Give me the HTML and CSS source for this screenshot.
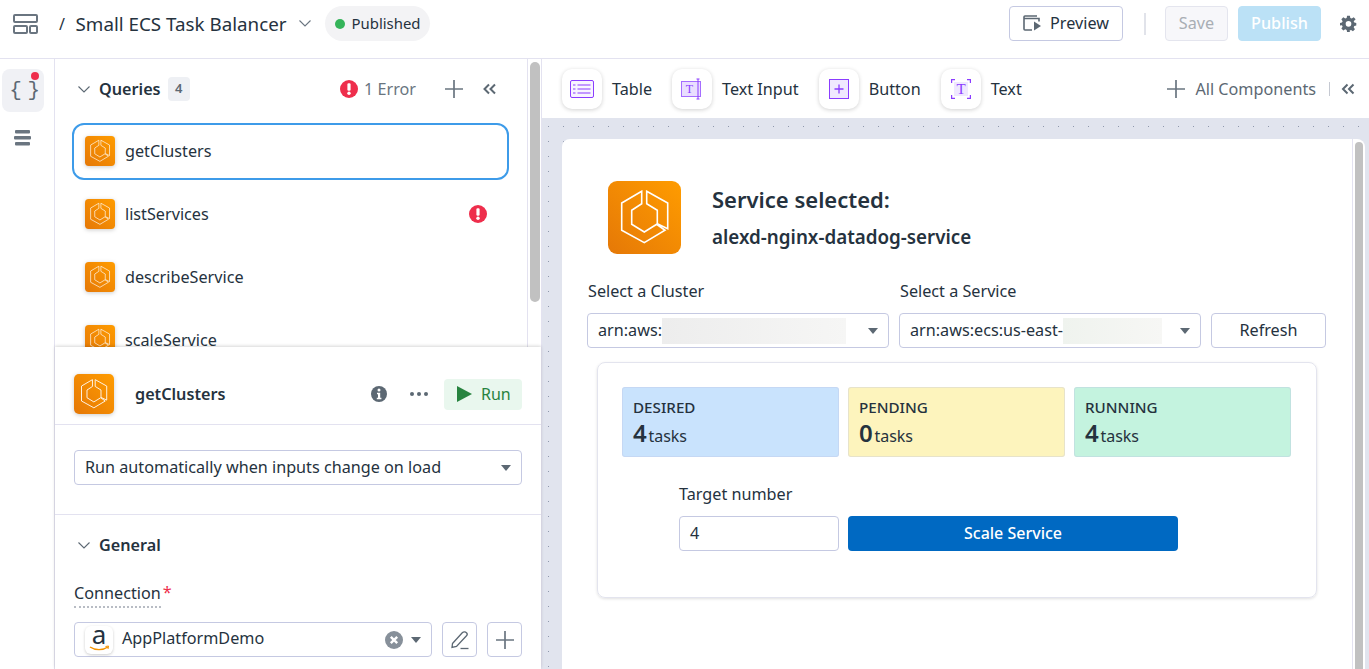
FILE: index.html
```html
<!DOCTYPE html>
<html lang="en">
<head>
<meta charset="utf-8">
<title>Small ECS Task Balancer</title>
<link rel="stylesheet" href="styles.css">
</head>
<body>
<svg class="defs" width="0" height="0" aria-hidden="true">
  <defs>
    <linearGradient id="aws" x1="0" y1="1" x2="1" y2="0">
      <stop offset="0" stop-color="#e57807"/>
      <stop offset="1" stop-color="#ff9c00"/>
    </linearGradient>
    <symbol id="ecs" viewBox="0 0 73 73">
      <rect width="73" height="73" rx="9" fill="url(#aws)"/>
      <path d="M33.7 10.3 13.7 22v27.3l22.6 12.4L57 49.3l-8.3-6-12.4 7.7-12.6-7.700V29.3l10-6.6zM38.700 10.300l21 11.700v25.700l-10.400-5V29.300l-10.600-6.600z" fill="none" stroke="#fff" stroke-width="1.6" stroke-linejoin="miter"/>
    </symbol>
    <symbol id="err" viewBox="0 0 18 18">
      <circle cx="9" cy="9" r="9" fill="#ee2e4c"/>
      <rect x="7.4" y="3.2" width="3.2" height="7.6" rx="1.2" fill="#fff"/>
      <circle cx="9" cy="13.2" r="1.7" fill="#fff"/>
    </symbol>
    <symbol id="plus" viewBox="0 0 18 18">
      <path d="M9 0v18M0 9h18" stroke="currentColor" stroke-width="1.7" fill="none"/>
    </symbol>
    <symbol id="dbl" viewBox="0 0 14 12">
      <path d="M6.5 1.5 2 6l4.5 4.5M12.5 1.5 8 6l4.5 4.5" stroke="currentColor" stroke-width="2" fill="none"/>
    </symbol>
    <symbol id="chev" viewBox="0 0 12 7">
      <path d="M.5.5 6 6 11.500 .5" stroke="currentColor" stroke-width="1.1" fill="none"/>
    </symbol>
  </defs>
</svg>

<header class="topbar">
  <svg class="apps-icon" width="25" height="20" viewBox="0 0 25 20" fill="none" stroke="#6a7580" stroke-width="2">
    <rect x="1" y="1" width="23" height="7" rx="1"/>
    <rect x="1" y="12" width="13" height="7" rx="1"/>
    <rect x="17" y="12" width="7" height="7" rx="1"/>
  </svg>
  <span class="slash">/</span>
  <span class="app-title">Small ECS Task Balancer</span>
  <svg class="title-chev" width="12" height="7"><use href="#chev"/></svg>
  <span class="pill"><i class="pill-dot"></i><span class="pill-text">Published</span></span>
  <span class="spacer"></span>
  <button class="btn btn-preview">
    <svg width="19" height="16" viewBox="0 0 19 16" fill="none">
      <path d="M14 1H2a1 1 0 0 0-1 1v12a1 1 0 0 0 1 1h7" stroke="#5c6873" stroke-width="1.6"/>
      <path d="M1 3.500h15v3" stroke="#5c6873" stroke-width="1.600"/>
      <path d="M11 6.500v9l7-4.500z" fill="#5c6873"/>
    </svg>
    Preview
  </button>
  <i class="top-sep"></i>
  <button class="btn btn-save">Save</button>
  <button class="btn btn-publish">Publish</button>
  <svg class="gear" width="17" height="17" viewBox="0 0 24 24">
    <path fill="#5c6873" fill-rule="evenodd" d="M10 1h4l.6 3.100 2 .9 2.700-1.800 2.800 2.800L19.300 8.700l.9 2L23 11.200v3.600l-2.800.6-.9 2 1.800 2.700-2.800 2.800-2.700-1.800-2 .9L14 24h-4l-.6-2.900-2-.9-2.700 1.800-2.800-2.800 1.800-2.700-.9-2L0 14.800v-3.600l2.800-.5.900-2L1.900 6l2.800-2.800L7.400 5l2-.9zM12 8.500a4 4 0 1 0 0 8 4 4 0 0 0 0-8z"/>
  </svg>
</header>

<div class="workspace">
  <nav class="rail">
    <div class="rail-tab"><span class="braces">{ }</span><i class="rail-dot"></i></div>
    <svg class="rail-stack" width="17" height="16" viewBox="0 0 17 16" fill="#6a7580">
      <rect x="1" y="0" width="15" height="3.600" rx="1"/>
      <rect x="0" y="6" width="17" height="3.600" rx="1"/>
      <rect x="1" y="12" width="15" height="3.600" rx="1"/>
    </svg>
  </nav>

  <aside class="side">
    <section class="queries">
      <div class="query-col">
        <div class="query-head">
          <svg class="head-chev" width="12" height="7"><use href="#chev"/></svg>
          <strong class="head-title">Queries</strong>
          <span class="count">4</span>
          <span class="spacer"></span>
          <svg width="18" height="18"><use href="#err"/></svg>
          <span class="err-text">1 Error</span>
          <svg class="head-plus" width="18" height="18"><use href="#plus"/></svg>
          <svg class="head-collapse" width="15" height="12"><use href="#dbl"/></svg>
        </div>
        <div class="query-row is-selected">
          <svg class="q-icon" width="30" height="30"><use href="#ecs"/></svg>
          <span class="q-name">getClusters</span>
        </div>
        <div class="query-row">
          <svg class="q-icon" width="30" height="30"><use href="#ecs"/></svg>
          <span class="q-name">listServices</span>
          <span class="spacer"></span>
          <svg class="q-err" width="18" height="18"><use href="#err"/></svg>
        </div>
        <div class="query-row">
          <svg class="q-icon" width="30" height="30"><use href="#ecs"/></svg>
          <span class="q-name">describeService</span>
        </div>
        <div class="query-row">
          <svg class="q-icon" width="30" height="30"><use href="#ecs"/></svg>
          <span class="q-name">scaleService</span>
        </div>
      </div>
      <div class="track"><i class="thumb"></i></div>
    </section>

    <section class="editor">
      <div class="editor-head">
        <svg class="editor-icon" width="40" height="40"><use href="#ecs"/></svg>
        <strong class="editor-name">getClusters</strong>
        <span class="spacer"></span>
        <svg class="info" width="16" height="16" viewBox="0 0 16 16">
          <circle cx="8" cy="8" r="8" fill="#5c6873"/>
          <circle cx="8" cy="4" r="1.500" fill="#fff"/>
          <path d="M6 6.800h3.200v5H10.400v1.400H5.800v-1.400h1.200V8.200H6z" fill="#fff"/>
        </svg>
        <svg class="dots" width="18" height="4" viewBox="0 0 18 4" fill="#5c6873">
          <circle cx="2" cy="2" r="2"/><circle cx="9" cy="2" r="2"/><circle cx="16" cy="2" r="2"/>
        </svg>
        <button class="run">
          <svg width="15" height="16" viewBox="0 0 15 16"><path d="M0 0l15 8-15 8z" fill="#27833f"/></svg>
          <span class="txt">Run</span>
        </button>
      </div>
      <div class="editor-trigger">
        <div class="select select-wide"><span class="txt">Run automatically when inputs change on load</span><i class="caret"></i></div>
      </div>
      <div class="editor-general">
        <div class="general-head">
          <svg class="head-chev" width="12" height="7"><use href="#chev"/></svg>
          <strong class="head-title">General</strong>
        </div>
        <div class="conn-label"><span class="dotted">Connection</span><span class="req">*</span></div>
        <div class="conn-row">
          <div class="select conn-select">
            <span class="amazon">
              <svg width="28" height="28" viewBox="0 0 28 28">
                <text x="14" y="18" text-anchor="middle" class="amazon-a">a</text>
                <path d="M5 21c5 3.500 13 3.500 18 0" stroke="#f59300" stroke-width="1.400" fill="none"/>
                <path d="M20.500 20.500l3-.5-.5 3" stroke="#f59300" stroke-width="1" fill="none"/>
              </svg>
            </span>
            <span class="conn-name">AppPlatformDemo</span>
            <span class="spacer"></span>
            <svg width="18" height="18" viewBox="0 0 18 18">
              <circle cx="9" cy="9" r="9" fill="#87909a"/>
              <path d="M5.800 5.800l6.400 6.400M12.200 5.800l-6.400 6.400" stroke="#fff" stroke-width="2.400"/>
            </svg>
            <i class="caret caret-conn"></i>
          </div>
          <button class="square">
            <svg width="20" height="20" viewBox="0 0 20 20" fill="none" stroke="#5c6873" stroke-width="1.300">
              <path d="M2.500 13.500 12.500 2.500c1-1 3-1 4 .3 1 1 .8 2.200 0 3L6.500 16.500l-4.500 1z"/>
              <path d="M10.500 18.500h8"/>
            </svg>
          </button>
          <button class="square">
            <svg width="18" height="18" class="square-plus"><use href="#plus"/></svg>
          </button>
        </div>
      </div>
    </section>
  </aside>

  <main class="stage">
    <div class="palette">
      <div class="tile">
        <svg width="24" height="18" viewBox="0 0 24 18" fill="none" stroke="#8b3dff">
          <rect x=".5" y=".5" width="23" height="17" rx="1.500" fill="#f8f5ff"/>
          <path d="M7.500 5h13M7.500 9h13M7.500 13h13" stroke-width="1.200"/>
          <path d="M3 5h2.500M3 9h2.500M3 13h2.500" stroke-width="1.200"/>
        </svg>
      </div>
      <span class="tile-label">Table</span>
      <div class="tile">
        <svg width="22" height="22" viewBox="0 0 22 22" fill="none" stroke="#8b3dff">
          <rect x=".5" y="3.500" width="19" height="15" fill="#e9deff" stroke="#a56dff"/>
          <path d="M17 1v20M15.500 1h3M15.500 21h3"/>
          <text x="8.500" y="15" text-anchor="middle" class="tile-t">T</text>
        </svg>
      </div>
      <span class="tile-label">Text Input</span>
      <div class="tile">
        <svg width="20" height="20" viewBox="0 0 20 20" fill="#f0e9ff" stroke="#8b3dff">
          <rect x=".5" y=".5" width="19" height="19"/>
          <path d="M10 5.500v9M5.500 10h9" stroke-width="1.300" fill="none"/>
        </svg>
      </div>
      <span class="tile-label">Button</span>
      <div class="tile">
        <svg width="20" height="20" viewBox="0 0 20 20" fill="none" stroke="#8b3dff" stroke-width="1.200">
          <rect x="3" y="3" width="14" height="14" fill="#efe8ff" stroke="none"/>
          <path d="M.6 4V.6H4M16 .6h3.400V4M.6 16v3.400H4M16 19.400h3.400V16"/>
          <text x="10" y="15" text-anchor="middle" class="tile-t tile-t-lg">T</text>
        </svg>
      </div>
      <span class="tile-label">Text</span>
      <span class="spacer"></span>
      <svg class="all-plus" width="18" height="18"><use href="#plus"/></svg>
      <span class="all-label">All Components</span>
      <i class="all-sep"></i>
      <svg class="all-collapse" width="14" height="12"><use href="#dbl"/></svg>
    </div>

    <div class="canvas">
      <div class="sheet">
        <div class="sheet-body">
          <div class="hero">
            <svg width="73" height="73"><use href="#ecs"/></svg>
            <div class="hero-text">
              <h1 class="hero-title">Service selected:</h1>
              <h2 class="hero-sub">alexd-nginx-datadog-service</h2>
            </div>
          </div>
          <div class="pickers">
            <label class="pick-label">Select a Cluster</label>
            <label class="pick-label">Select a Service</label>
            <span></span>
            <div class="select"><span class="txt">arn:aws:</span><i class="redact redact-a"></i><span class="spacer"></span><i class="caret"></i></div>
            <div class="select"><span class="txt">arn:aws:ecs:us-east-</span><i class="redact redact-b"></i><span class="spacer"></span><i class="caret"></i></div>
            <button class="btn btn-refresh">Refresh</button>
          </div>
          <div class="card">
            <div class="stats">
              <div class="stat stat-blue"><div class="stat-name">DESIRED</div><div class="stat-line"><b>4</b> tasks</div></div>
              <div class="stat stat-yellow"><div class="stat-name">PENDING</div><div class="stat-line"><b>0</b> tasks</div></div>
              <div class="stat stat-green"><div class="stat-name">RUNNING</div><div class="stat-line"><b>4</b> tasks</div></div>
            </div>
            <div class="scale">
              <div class="scale-label">Target number</div>
              <div class="scale-row">
                <div class="number">4</div>
                <button class="btn-scale">Scale Service</button>
              </div>
            </div>
          </div>
        </div>
        <div class="sheet-track"><i class="sheet-thumb"></i></div>
      </div>
    </div>
  </main>
</div>
</body>
</html>
```

FILE: styles.css
```css
* { box-sizing: border-box; }
html, body { margin: 0; height: 100%; }
body {
  width: 1369px;
  height: 669px;
  overflow: hidden;
  background: #fff;
  color: #25323e;
  font-family: "Noto Sans", "Liberation Sans", sans-serif;
  font-size: 16.2px;
}
.defs { position: absolute; }
.spacer { flex: 1 1 auto; }
.txt { padding-bottom: 1px; }
button { font: inherit; color: inherit; background: #fff; cursor: default; }
i { display: block; font-style: normal; }
svg { display: block; flex: none; }

/* top bar */
.topbar {
  display: flex;
  align-items: center;
  height: 59px;
  padding: 0 12px 11px 13px;
  border-bottom: 1px solid #e3e2f0;
}
.slash { margin-left: 21px; font-size: 16px; }
.app-title { margin-left: 10.6px; font-size: 18.8px; }
.title-chev { margin-left: 12px; color: #6a7580; }
.pill {
  display: flex;
  align-items: center;
  gap: 7px;
  height: 35px;
  margin-left: 14px;
  padding: 0 10px;
  border-radius: 18px;
  background: #f3f3f5;
  font-size: 14.9px;
}
.pill-dot { width: 10px; height: 10px; border-radius: 50%; background: #35b45a; }
.pill-text { padding-bottom: 1px; }
.btn {
  display: flex;
  align-items: center;
  justify-content: center;
  height: 35px;
  padding: 0 0 1px;
  border: 1px solid #c5c9e2;
  border-radius: 4px;
  font-size: 16.2px;
}
.btn-preview { gap: 8px; width: 114px; }
.top-sep { width: 2px; height: 22px; margin: 0 19px 0 21px; background: #e1e3ea; }
.btn-save { width: 63px; color: #a9aeb4; background: #f7f7fa; border-color: #e4e5ee; }
.btn-publish { width: 83px; margin-left: 10px; color: #fff; background: #bbe1f6; border-color: #bbe1f6; font-weight: 500; }
.gear { margin-left: 19px; }

/* workspace */
.workspace { display: flex; height: 610px; }
.rail { flex: none; width: 55px; padding: 10px 0 0 2px; border-right: 1px solid #e3e2f0; }
.rail-tab {
  position: relative;
  display: flex;
  align-items: center;
  justify-content: center;
  width: 42px;
  height: 43px;
  border-radius: 8px;
  background: #f0f1f5;
}
.braces { font-family: "Liberation Mono", monospace; font-size: 21px; color: #5c6873; letter-spacing: -3.5px; }
.rail-dot { position: absolute; top: 3px; right: 5px; width: 8px; height: 8px; border-radius: 50%; background: #ee2e4c; }
.rail-stack { margin: 18px 0 0 12px; }

.side { display: flex; flex-direction: column; flex: none; width: 487px; border-right: 1px solid #e3e2f0; }
.queries { display: flex; height: 288px; overflow: hidden; }
.query-col { flex: 1; padding: 0 18px 0 17px; }
.query-head { display: flex; align-items: center; height: 64px; padding: 0 12px 4px 6px; }
.head-chev { color: #5c6873; }
.head-title { margin-left: 9px; font-size: 16.2px; font-weight: 600; }
.count {
  width: 22px;
  height: 24px;
  margin-left: 7px;
  border-radius: 4px;
  background: #eef0f4;
  color: #5c6873;
  font-size: 13px;
  font-weight: 600;
  line-height: 23px;
  text-align: center;
}
.err-text { margin-left: 6px; color: #69757f; }
.head-plus { margin-left: 29px; color: #6a7580; }
.head-collapse { margin-left: 19px; color: #5c6873; }
.query-row {
  display: flex;
  align-items: center;
  gap: 10px;
  height: 57px;
  margin-bottom: 6px;
  padding: 0 20px 1px 11px;
  border: 2px solid transparent;
  border-radius: 12px;
}
.query-row.is-selected { border-color: #3d9be9; }
.q-name { padding-bottom: 1px; }
.q-icon { filter: drop-shadow(0 1px 2px rgba(0, 0, 0, .2)); }
.track { flex: none; width: 14px; padding: 3px 1px 0 2px; border-left: 1px solid #e3e2f0; }
.thumb { width: 10px; height: 240px; border-radius: 5px; background: #c1c1c1; }

.editor {
  position: relative;
  flex: 1;
  background: #fff;
  box-shadow: 0 -1px 3px rgba(0, 0, 0, .16);
}
.editor-head {
  display: flex;
  align-items: center;
  height: 78px;
  padding: 17px 19px 0;
  border-bottom: 1px solid #e3e2f0;
}
.editor-icon { filter: drop-shadow(0 1px 2px rgba(0, 0, 0, .2)); }
.editor-name { margin-left: 21px; font-size: 16.2px; font-weight: 600; }
.dots { margin-left: 23px; }
.run {
  display: flex;
  align-items: center;
  gap: 9px;
  width: 78px;
  height: 31px;
  margin-left: 16px;
  padding: 0 0 0 13px;
  border: 0;
  border-radius: 4px;
  background: #e9f7ee;
  color: #27833f;
  font-size: 16px;
}
.editor-trigger { height: 90px; padding: 25px 19px 0; border-bottom: 1px solid #e3e2f0; }
.select {
  display: flex;
  align-items: center;
  height: 35px;
  padding: 0 10px;
  border: 1px solid #c5c9e2;
  border-radius: 4px;
  background: #fff;
  font-size: 16.2px;
  white-space: nowrap;
}
.select-wide { justify-content: space-between; }
.caret {
  width: 0;
  height: 0;
  border-left: 5.500px solid transparent;
  border-right: 5.500px solid transparent;
  border-top: 6px solid #5c6873;
}
.editor-general { padding: 0 19px; }
.general-head { display: flex; align-items: center; height: 60px; padding: 0 0 0 4px; }
.conn-label { display: flex; margin-top: 8px; height: 39px; }
.dotted { height: 25px; line-height: 20px; border-bottom: 2px dotted #b8bcc4; }
.req { margin-left: 2px; line-height: 18px; color: #ee2e4c; }
.conn-row { display: flex; align-items: center; gap: 10px; }
.conn-select { flex: none; width: 358px; height: 35px; padding: 0 10px 0 10px; }
.amazon {
  width: 28px;
  height: 28px;
  border-radius: 6px;
  box-shadow: 0 1px 3px rgba(0, 0, 0, .2);
}
.amazon svg { overflow: visible; }
.amazon-a { font-family: "Noto Sans", sans-serif; font-size: 26px; fill: #25323e; }
.conn-name { margin-left: 9px; padding-bottom: 3px; }
.caret-conn { margin-left: 8px; }
.square {
  display: flex;
  align-items: center;
  justify-content: center;
  width: 35px;
  height: 35px;
  padding: 0;
  border: 1px solid #c5c9e2;
  border-radius: 4px;
}
.square-plus { color: #6a7580; }

/* stage */
.stage { display: flex; flex-direction: column; flex: 1; min-width: 0; }
.palette { display: flex; align-items: center; flex: none; height: 59px; padding: 0 14px 0 20px; }
.tile {
  display: flex;
  align-items: center;
  justify-content: center;
  flex: none;
  width: 40px;
  height: 40px;
  border-radius: 10px;
  background: #fff;
  box-shadow: 0 1px 4px rgba(0, 0, 0, .18);
}
.tile-t { font-family: "Liberation Serif", serif; font-size: 12px; fill: #8b3dff; stroke: none; }
.tile-t-lg { font-size: 15px; }
.tile-label { margin: 0 20px 0 10px; }
.all-plus { color: #6a7580; }
.all-label { margin-left: 10px; color: #5c6873; font-size: 16.2px; }
.all-sep { width: 1px; height: 14px; margin: 0 11px 0 13px; background: #c5c9d2; }
.all-collapse { color: #5c6873; }

.canvas {
  flex: 1;
  min-height: 0;
  padding: 21px 4px 0 20px;
  background-color: #e1e4ee;
  background-image: radial-gradient(circle, #8f98ad .6px, transparent 1px);
  background-size: 15px 15px;
  background-position: -1px 1px;
  overflow: hidden;
}
.sheet { display: flex; height: 100%; border-radius: 8px 8px 0 0; background: #fff; }
.sheet-body { flex: none; width: 790px; }
.sheet-track { flex: 1; padding: 3px 0 0 2px; border-left: 1px solid #e3e2f0; }
.sheet-thumb { width: 8px; height: 560px; border-radius: 4px; background: #c1c1c1; }

.hero { display: flex; align-items: flex-start; gap: 31px; padding: 42px 0 0 46px; }
.hero-title { margin: 0; font-size: 22px; font-weight: 600; line-height: 30px; }
.hero-sub { margin: 11px 0 0; font-size: 18.8px; font-weight: 600; line-height: 24px; }
.hero-text { padding-top: 3px; }

.pickers {
  display: grid;
  grid-template-columns: 302px 302px 115px;
  column-gap: 10px;
  row-gap: 11px;
  margin: 26px 0 0 25px;
}
.pick-label { padding-left: 1px; font-size: 16.2px; line-height: 22px; }
.redact { height: 26px; }
.redact-a { width: 184px; background: linear-gradient(90deg, #ededed, #f6f6f5); }
.redact-b { width: 99px; background: linear-gradient(90deg, #eff3ee, #f7f7f5); }
.btn-refresh { height: 35px; }

.card {
  width: 720px;
  height: 236px;
  margin: 14px 0 0 35px;
  padding: 24px 24px 0;
  border: 1px solid #e3e4ee;
  border-radius: 8px;
  box-shadow: 0 1px 3px rgba(0, 0, 0, .12);
}
.stats { display: grid; grid-template-columns: repeat(3, 217px); column-gap: 9px; }
.stat {
  height: 70px;
  padding: 10px 11px 0;
  border-radius: 3px;
  box-shadow: inset 0 0 0 1px rgba(190, 195, 225, .35);
}
.stat-blue { background: #c9e3fd; }
.stat-yellow { background: #fdf4bd; }
.stat-green { background: #c4f3df; }
.stat-name { font-size: 15.2px; font-weight: 500; line-height: 21px; }
.stat-line { margin-top: -1px; font-size: 16px; line-height: 31px; word-spacing: -2.500px; }
.stat-line b { font-size: 24px; font-weight: 600; }
.scale { margin: 27px 0 0 57px; }
.scale-label { font-size: 16.2px; line-height: 20px; }
.scale-row { display: flex; gap: 9px; margin-top: 12px; }
.number {
  width: 160px;
  height: 35px;
  padding: 0 10px;
  border: 1px solid #c5c9e2;
  border-radius: 4px;
  line-height: 33px;
}
.btn-scale {
  width: 330px;
  height: 35px;
  padding: 0 0 2px;
  border: 0;
  border-radius: 4px;
  background: #0069c2;
  color: #fff;
  font-size: 16px;
  font-weight: 500;
}
```
